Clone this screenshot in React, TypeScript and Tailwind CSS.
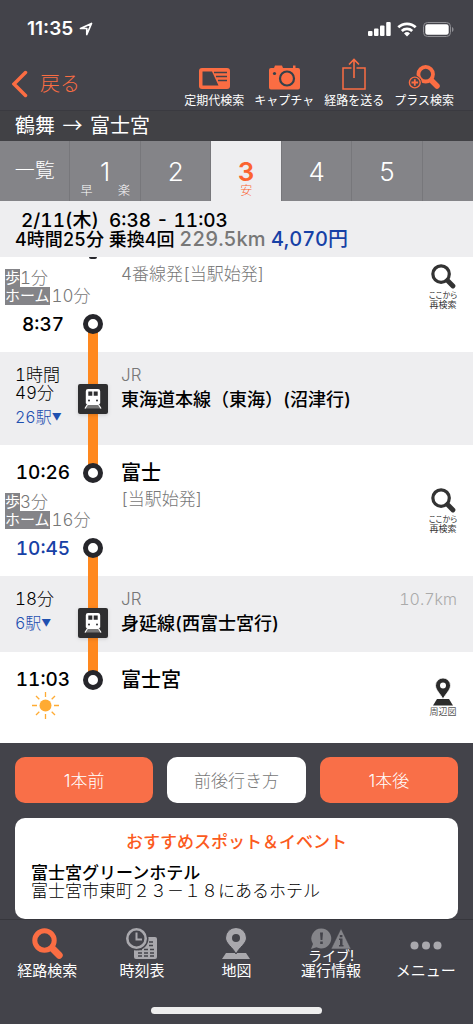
import type { ReactNode } from "react";

function SearchIcon({ size, ring = 5, handle = 7 }: { size: number; ring?: number; handle?: number }) {
  return (
    <svg width={size} height={size} viewBox="0 0 31 31" fill="none" stroke="currentColor">
      <circle cx="12.5" cy="12.5" r={12.2 - ring / 2} strokeWidth={ring} />
      <path d="M20.5 20.5 27.2 27.2" strokeWidth={handle} strokeLinecap="round" />
    </svg>
  );
}

function PassIcon() {
  return (
    <svg width="31" height="22" viewBox="0 0 31 22">
      <rect width="31" height="21" rx="3" fill="#fb6d43" />
      <path d="M3.500 3.500h9.500l6.500 14h-16z" fill="#43434a" />
      <path d="M15 4.500h13M17 8.500h11M19 12.500h9" stroke="#43434a" strokeWidth="1.300" />
    </svg>
  );
}

function CameraIcon() {
  return (
    <svg width="31" height="25" viewBox="0 0 31 25">
      <path d="M2 3h3l1-2.500h7L14 3h10V.5h2.500V3H29a2 2 0 0 1 2 2v17.500a2 2 0 0 1-2 2H2a2 2 0 0 1-2-2V5a2 2 0 0 1 2-2z" fill="#fb6d43" />
      <circle cx="18" cy="13.500" r="7" fill="#fb6d43" stroke="#33414b" strokeWidth="2.200" />
      <circle cx="5.500" cy="8.500" r="1.600" fill="#33414b" />
    </svg>
  );
}

function ShareIcon() {
  return (
    <svg width="24" height="32" viewBox="0 0 24 32" fill="none">
      <path d="M1 10h22v21H1z" stroke="#fb6d43" strokeWidth="1.500" />
      <path d="M12 4v17" stroke="#43434a" strokeWidth="5" />
      <path d="M12 2v18M7 6.500l5-5 5 5" stroke="#fb6d43" strokeWidth="1.600" />
    </svg>
  );
}

function PlusSearchIcon() {
  return (
    <svg width="32" height="26" viewBox="0 0 32 26" fill="none" stroke="#fb6d43">
      <circle cx="17.700" cy="10.200" r="7.300" strokeWidth="3.800" />
      <path d="M24 17l5 5" strokeWidth="5.500" strokeLinecap="round" />
      <circle cx="6.800" cy="18.500" r="6.500" fill="#43434a" stroke="#43434a" />
      <circle cx="6.800" cy="18.500" r="5.400" strokeWidth="1.400" />
      <path d="M6.800 15.200v6.600M3.500 18.500h6.600" strokeWidth="1.800" />
    </svg>
  );
}

function TrainIcon() {
  return (
    <svg width="30" height="30" viewBox="0 0 30 30" className="relative z-10 shrink-0 drop-shadow">
      <rect width="30" height="30" rx="2" fill="#2e2e30" />
      <path d="M9 21 6.500 24.500h17L21 21z" fill="#777" />
      <path d="M9.500 20.500 7 24.500M20.500 20.500l2.500 4" stroke="#fff" strokeWidth="1.200" />
      <path d="M10 5h10a2.200 2.200 0 0 1 2.200 2.200v12l-1.700 1.800h-11l-1.700-1.800v-12A2.200 2.200 0 0 1 10 5z" fill="#fff" />
      <path d="M10.300 7.500h4v4.300h-4zM15.700 7.500h4v4.300h-4z" fill="#2e2e30" />
      <circle cx="11" cy="16.500" r="1" fill="#2e2e30" />
      <circle cx="19" cy="16.500" r="1" fill="#2e2e30" />
    </svg>
  );
}

function SunIcon() {
  return (
    <svg width="27" height="27" viewBox="0 0 27 27" stroke="#ffab33" strokeWidth="1.300">
      <circle cx="13.500" cy="13.500" r="6" fill="#ffab33" stroke="none" />
      <path d="M13.500 0v5M13.500 22v5M0 13.500h5M22 13.500h5M4 4l3.300 3.300M19.700 19.700 23 23M4 23l3.300-3.300M19.700 7.300 23 4" />
    </svg>
  );
}

function MapPinIcon() {
  return (
    <svg width="20" height="28" viewBox="0 0 20 28" fill="#2b2b2b">
      <path d="M4 21h12l4 6.500H0z" />
      <path d="M10 21C7.500 16 2.500 12 2.500 7.500a7.500 7.500 0 0 1 15 0C17.500 12 12.500 16 10 21z" stroke="#fff" strokeWidth=".8" />
      <circle cx="10" cy="7.500" r="3" fill="#fff" />
    </svg>
  );
}

function TimetableIcon() {
  return (
    <svg width="31" height="31" viewBox="0 0 31 31" fill="#a9a8ad">
      <path d="M8 9h21a2 2 0 0 1 2 2v18a2 2 0 0 1-2 2H10a2 2 0 0 1-2-2z" />
      <path d="M12 21.500h16M12 25h16M12 28h16M23 14h5M23 17.500h5" stroke="#43434a" strokeWidth="1.500" strokeDasharray="4 2" />
      <circle cx="10.500" cy="10.500" r="12" fill="#43434a" />
      <circle cx="10.500" cy="10.500" r="9.200" fill="#43434a" stroke="#a9a8ad" strokeWidth="2.600" />
      <path d="M10.500 4.500v7h5.500" fill="none" stroke="#a9a8ad" strokeWidth="2" />
    </svg>
  );
}

function MapIcon() {
  return (
    <svg width="28" height="31" viewBox="0 0 28 31" fill="#a9a8ad">
      <path d="M4 25h20l4 6H0z" />
      <path d="M14 26C11 19.500 3.500 15.500 3.500 10a10.500 10.500 0 0 1 21 0C24.500 15.500 17 19.500 14 26z" stroke="#43434a" strokeWidth="1" />
      <circle cx="14" cy="10" r="4" fill="#43434a" />
    </svg>
  );
}

function LiveIcon() {
  return (
    <svg width="40" height="22" viewBox="0 0 40 22" fill="#85858a" className="shrink-0">
      <path d="M10.500.5a10 10 0 1 1-5 18.800L0 21l2-5A10 10 0 0 1 10.500.5z" />
      <path d="M30 .5 40 21H20z" stroke="#43434a" strokeWidth=".6" />
      <path d="M9 4.500h3l-.6 7.500H9.600zM9.200 13.500h2.600v2.500H9.200zM28.800 7h2.600v2.300h-2.600zM28 10.500h3.500V17h1v1.500H28V17h1v-5h-1z" fill="#43434a" />
    </svg>
  );
}

function Ring() {
  return <span className="relative z-10 size-5 shrink-0 rounded-full border-[5px] border-[#26262b] bg-white" />;
}

function Line({ className }: { className: string }) {
  return <span className={`w-2.5 bg-[#ff881e] ${className}`} />;
}

function Transfer({ walk, platform }: { walk: string; platform: string }) {
  return (
    <div className="pl-[5px] text-[17px] leading-[18px] font-light whitespace-nowrap text-[#777]">
      <p className="flex">
        <span className="bg-[#848488] text-[15px] font-normal text-white">歩</span>
        {walk}
      </p>
      <p className="flex gap-0.5">
        <span className="bg-[#848488] text-[15px] font-normal text-white">ホーム</span>
        {platform}
      </p>
    </div>
  );
}

function Time({ children, blue }: { children: string; blue?: boolean }) {
  return (
    <p className={`ml-[15px] w-14 text-center text-[19px] leading-7 font-medium ${blue ? "text-[#1741a6]" : "text-black"}`}>
      {children}
    </p>
  );
}

function SearchFromHere() {
  return (
    <button className="flex w-[30px] flex-col items-center text-[9px] leading-[9px] whitespace-nowrap text-[#333]">
      <SearchIcon size={25} ring={4} handle={6} />
      <span className="mt-0.5 text-[8px] [font-feature-settings:'palt']">ここから</span>
      <span>再検索</span>
    </button>
  );
}

function HeaderButton({ icon, label }: { icon: ReactNode; label: string }) {
  return (
    <button className="flex flex-col items-center">
      <span className="flex h-8 items-end">{icon}</span>
      <span className="mt-px text-xs leading-5">{label}</span>
    </button>
  );
}

const tabs = [
  { label: "一覧", size: "text-xl" },
  { label: "1", size: "text-[26px]", marks: ["早", "楽"] },
  { label: "2", size: "text-[26px]" },
  { label: "3", size: "text-[26px]", marks: ["安"], active: true },
  { label: "4", size: "text-[26px]" },
  { label: "5", size: "text-[26px]" },
];

const menu = [
  { label: "経路検索", icon: <SearchIcon size={31} />, active: true },
  { label: "時刻表", icon: <TimetableIcon /> },
  { label: "地図", icon: <MapIcon /> },
  { label: "運行情報", icon: <LiveIcon />, live: true },
  {
    label: "メニュー",
    icon: (
      <svg width="32" height="28" viewBox="0 0 32 28" fill="#a9a8ad">
        <circle cx="4.500" cy="17.500" r="4" />
        <circle cx="16" cy="17.500" r="4" />
        <circle cx="27.500" cy="17.500" r="4" />
      </svg>
    ),
  },
];

const row = "grid grid-cols-[77px_32px_minmax(0,1fr)]";
const track = "flex flex-col items-center";

export default function App() {
  return (
    <div className="flex min-h-screen flex-col bg-[#43434a] font-['Inter','Noto_Sans_CJK_JP',sans-serif] text-white">
      {/* Status bar */}
      <div className="flex h-[58px] items-center justify-between pr-[19px] pl-[27px]">
        <span className="flex items-center gap-1.5 text-[19px] font-semibold">
          11:35
          <svg width="14" height="14" viewBox="0 0 14 14" fill="none" stroke="#fff" strokeWidth="1.700" strokeLinejoin="round">
            <path d="M1.500 6.500 12.500 1.500 7.800 12.500V6.500z" />
          </svg>
        </span>
        <span className="flex items-center gap-1.5">
          <svg width="23" height="14" viewBox="0 0 23 14" fill="#fff">
            <rect y="9" width="4.500" height="5" rx="1" />
            <rect x="6" y="6.500" width="4.500" height="7.500" rx="1" />
            <rect x="12" y="3.500" width="4.500" height="10.500" rx="1" />
            <rect x="18.200" width="4.500" height="14" rx="1" />
          </svg>
          <svg width="20" height="15" viewBox="0 0 20 15" fill="none" stroke="#fff" strokeWidth="2.700">
            <path d="M1.300 5.300a12.500 12.500 0 0 1 17.400 0M4.800 9a7.500 7.500 0 0 1 10.400 0" />
            <path d="M10 14.500 7 11.500a4.300 4.300 0 0 1 6 0z" fill="#fff" stroke="none" />
          </svg>
          <svg width="31" height="15" viewBox="0 0 31 15">
            <rect x=".5" y=".5" width="27" height="14" rx="4" fill="none" stroke="#8f8f94" />
            <rect x="2.300" y="2.300" width="23.400" height="10.400" rx="2.300" fill="#fff" />
            <path d="M29 5c2 .8 2 4.200 0 5z" fill="#8f8f94" />
          </svg>
        </span>
      </div>

      {/* Header */}
      <header className="flex h-[53px] items-start justify-between border-b border-[#3a3a40] pr-[19px] pl-3">
        <button className="flex items-center gap-3 pt-3 text-xl leading-7 font-light text-[#fb6d43]">
          <svg width="16" height="28" viewBox="0 0 16 28" fill="none" stroke="currentColor" strokeWidth="3.500" strokeLinecap="round">
            <path d="M13.500 2.500 2 14l11.500 11.500" />
          </svg>
          戻る
        </button>
        <div className="flex gap-2.5">
          <HeaderButton icon={<PassIcon />} label="定期代検索" />
          <HeaderButton icon={<CameraIcon />} label="キャプチャ" />
          <HeaderButton icon={<ShareIcon />} label="経路を送る" />
          <HeaderButton icon={<PlusSearchIcon />} label="プラス検索" />
        </div>
      </header>
      <h1 className="bg-[#414145] px-[15px] pb-0.5 font-['Noto_Sans_CJK_JP',sans-serif] text-xl leading-7">
        鶴舞 <span className="px-[3px]">→</span> 富士宮
      </h1>

      {/* Route tabs */}
      <nav className="flex h-[60px] bg-[#848488]">
        {tabs.map((tab) => (
          <button
            key={tab.label}
            className={`relative w-[14.9%] border-r border-[#77777b] ${tab.size} ${
              tab.active ? "bg-[#eeeef0] font-semibold text-[#fb6430]" : "font-light"
            }`}
          >
            {tab.label}
            {tab.marks && (
              <span
                className={`absolute inset-x-2.5 bottom-0.5 flex text-xs leading-4 font-light ${
                  tab.active ? "justify-center" : "justify-between"
                }`}
              >
                {tab.marks.map((mark) => (
                  <span key={mark}>{mark}</span>
                ))}
              </span>
            )}
          </button>
        ))}
      </nav>

      {/* Summary */}
      <section className="bg-[#eeeef0] px-[15px] pt-[11px] pb-2 text-lg leading-[18px] font-medium text-black tabular-nums">
        <p className="pl-1.5 text-[19px] leading-[18px] whitespace-pre">2/11(木)  6:38 - 11:03</p>
        <p>
          4時間25分 乗換4回{" "}
          <span className="text-xl leading-[18px]">
            <span className="text-[#777]">229.5km</span> <span className="text-[#1741a6]">4,070円</span>
          </span>
        </p>
      </section>

      {/* Timetable */}
      <main className="bg-white text-lg text-black tabular-nums">
        <div className={`${row} min-h-[95px]`}>
          <div className="pt-3">
            <Transfer walk="1分" platform="10分" />
            <div className="mt-1.5">
              <Time>8:37</Time>
            </div>
          </div>
          <div className={track}>
            <span className="h-0.5 w-2 rounded-b-full bg-[#26262b]" />
            <span className="flex-1" />
            <Ring />
            <Line className="-mt-1 h-[22px]" />
          </div>
          <div className="flex items-start justify-between pr-[15px] pl-3">
            <p className="pt-[5px] text-[17px] leading-6 font-light text-[#777]">4番線発[当駅始発]</p>
            <div className="pt-[7px]">
              <SearchFromHere />
            </div>
          </div>
        </div>

        <div className={`${row} min-h-[93px] bg-[#eeeef0]`}>
          <div className="pt-3.5 pl-[15px] text-[17px] leading-[18px] font-light">
            <p>
              1時間
              <br />
              49分
            </p>
            <button className="mt-1.5 flex text-base leading-[18px] text-[#1f50b0]">
              26駅<span className="text-[10px]">▼</span>
            </button>
          </div>
          <div className={track}>
            <Line className="flex-1" />
            <TrainIcon />
            <Line className="flex-1" />
          </div>
          <div className="pt-3.5 pl-3">
            <p className="text-[17px] leading-[18px] font-light text-[#777]">JR</p>
            <p className="mt-1 leading-6 font-medium">東海道本線（東海）(沼津行)</p>
          </div>
        </div>

        <div className={`${row} min-h-[131px]`}>
          <div className="pt-3.5">
            <Time>10:26</Time>
            <div className="my-1.5">
              <Transfer walk="3分" platform="16分" />
            </div>
            <Time blue>10:45</Time>
          </div>
          <div className={track}>
            <Line className="-mb-1 h-[22px]" />
            <Ring />
            <span className="flex-1" />
            <Ring />
            <Line className="-mt-1 h-[22px]" />
          </div>
          <div className="flex items-start justify-between pr-[15px] pl-3">
            <div className="pt-3.5">
              <p className="text-xl leading-7 font-medium">富士</p>
              <p className="text-[17px] leading-6 font-light text-[#777]">[当駅始発]</p>
            </div>
            <div className="pt-[43px]">
              <SearchFromHere />
            </div>
          </div>
        </div>

        <div className={`${row} min-h-[76px] bg-[#eeeef0]`}>
          <div className="pt-3.5 pl-[15px] text-[17px] leading-[18px] font-light">
            <p>18分</p>
            <button className="mt-1.5 flex text-base leading-[18px] text-[#1f50b0]">
              6駅<span className="text-[10px]">▼</span>
            </button>
          </div>
          <div className={track}>
            <Line className="h-8" />
            <TrainIcon />
            <Line className="flex-1" />
          </div>
          <div className="pt-3.5 pr-4 pl-3">
            <div className="flex justify-between text-[17px] leading-[18px] font-light text-[#777]">
              <span>JR</span>
              <span className="text-base leading-[18px] text-[#aaa]">10.7km</span>
            </div>
            <p className="mt-1 leading-6 font-medium">身延線(西富士宮行)</p>
          </div>
        </div>

        <div className={`${row} min-h-[91px]`}>
          <div className="pt-3.5">
            <Time>11:03</Time>
            <div className="-mt-0.5 pl-8">
              <SunIcon />
            </div>
          </div>
          <div className={track}>
            <Line className="-mb-1 h-[22px]" />
            <Ring />
          </div>
          <div className="flex items-start justify-between pr-[15px] pl-3">
            <p className="pt-3.5 text-xl leading-7 font-medium">富士宮</p>
            <button className="flex w-[30px] flex-col items-center pt-[26px] text-[9px] leading-3 whitespace-nowrap text-[#555]">
              <MapPinIcon />
              周辺図
            </button>
          </div>
        </div>
      </main>

      {/* Earlier / later trains */}
      <div className="grid grid-cols-3 gap-3.5 px-[15px] pt-3.5 text-[17px] font-light">
        <button className="h-[46px] rounded-[10px] bg-[#f96f48] pt-1">1本前</button>
        <button className="h-[46px] rounded-[10px] bg-white pt-1 text-[#777]">前後行き方</button>
        <button className="h-[46px] rounded-[10px] bg-[#f96f48] pt-1">1本後</button>
      </div>

      <section className="mx-[15px] mt-[15px] rounded-[10px] bg-white px-4 pt-[15px] pb-[19px] text-[17px] leading-[18px] text-black">
        <h2 className="mb-[13px] text-center font-medium text-[#fb5a20]">おすすめスポット＆イベント</h2>
        <p className="font-medium">富士宮グリーンホテル</p>
        <p className="font-light">富士宮市東町２３－１８にあるホテル</p>
      </section>

      {/* Menu bar */}
      <nav className="grid grid-cols-5 border-t border-[#36363c] pt-2">
        {menu.map((item) => (
          <button key={item.label} className="flex flex-col items-center text-[15px] leading-5">
            <span className={`flex h-[33px] flex-col items-center ${item.active ? "text-[#fb6d43]" : ""}`}>
              {item.icon}
              {item.live && <span className="text-sm leading-3">ライブ!</span>}
            </span>
            {item.label}
          </button>
        ))}
      </nav>
      <div className="mx-auto mt-auto mb-2.5 h-[7px] w-[36%] rounded-full bg-[#eee]" />
    </div>
  );
}
